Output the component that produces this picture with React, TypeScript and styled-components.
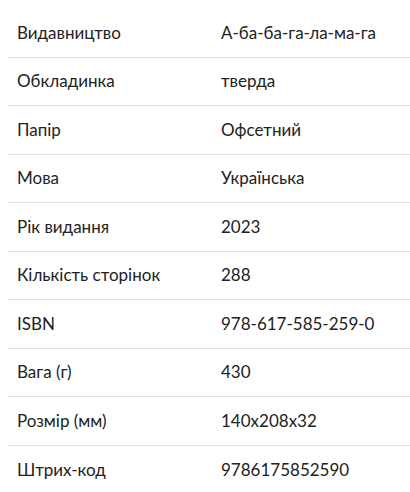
import React from "react";
import styled, { createGlobalStyle } from "styled-components";

const Global = createGlobalStyle`
  html, body { margin: 0; padding: 0; background: #fff; }
  body { font-family: Lato, "Open Sans", sans-serif; color: #222; }
`;

const Wrap = styled.div`
  padding: 9px 0 0 7px;
`;

const Table = styled.div`
  display: flex;
  flex-direction: column;
`;

const Row = styled.div<{ $last?: boolean }>`
  display: grid;
  grid-template-columns: 204px 1fr;
  height: 48.5px;
  align-items: center;
  box-sizing: border-box;
  border-bottom: ${(p) => (p.$last ? "none" : "1px solid #e2e2e2")};
`;

const Cell = styled.div`
  padding-left: 10px;
  font-size: 17px;
  line-height: 24px;
  white-space: nowrap;
`;

const data: [string, string][] = [
  ["Видавництво", "А-ба-ба-га-ла-ма-га"],
  ["Обкладинка", "тверда"],
  ["Папір", "Офсетний"],
  ["Мова", "Українська"],
  ["Рік видання", "2023"],
  ["Кількість сторінок", "288"],
  ["ISBN", "978-617-585-259-0"],
  ["Вага (г)", "430"],
  ["Розмір (мм)", "140x208x32"],
  ["Штрих-код", "9786175852590"],
];

export default function App() {
  return (
    <>
      <Global />
      <Wrap>
        <Table>
          {data.map(([k, v], i) => (
            <Row key={k} $last={i === data.length - 1}>
              <Cell>{k}</Cell>
              <Cell>{v}</Cell>
            </Row>
          ))}
        </Table>
      </Wrap>
    </>
  );
}
